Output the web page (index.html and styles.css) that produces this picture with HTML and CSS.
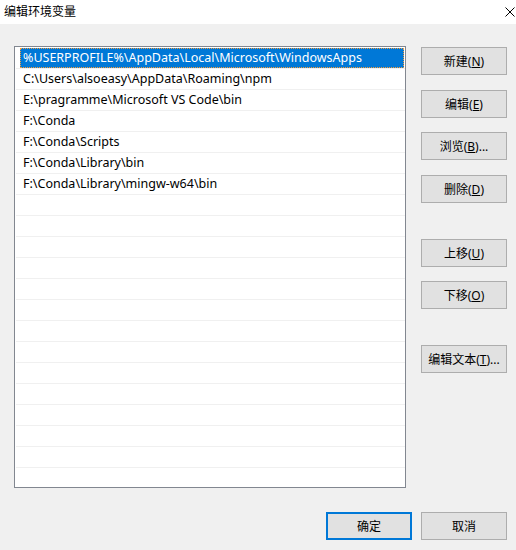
FILE: index.html
```html
<!DOCTYPE html>
<html lang="zh-CN">
<head>
    <meta charset="UTF-8">
    <title>编辑环境变量</title>
    <link rel="stylesheet" href="styles.css">
</head>
<body>
    <div class="window">
        <div class="titlebar">
            <span class="title">编辑环境变量</span>
            <svg class="close" width="10" height="10" viewBox="0 0 10 10">
                <path d="M0.5 0.5 L9.5 9.5 M9.5 0.5 L0.5 9.5" stroke="#000" stroke-width="1" fill="none"/>
            </svg>
        </div>

        <div class="content">
            <div class="main">
                <div class="listbox">
                    <div class="row"><div class="cell selected">%USERPROFILE%\AppData\Local\Microsoft\WindowsApps</div></div>
                    <div class="row"><div class="cell">C:\Users\alsoeasy\AppData\Roaming\npm</div></div>
                    <div class="row"><div class="cell">E:\pragramme\Microsoft VS Code\bin</div></div>
                    <div class="row"><div class="cell">F:\Conda</div></div>
                    <div class="row"><div class="cell">F:\Conda\Scripts</div></div>
                    <div class="row"><div class="cell">F:\Conda\Library\bin</div></div>
                    <div class="row"><div class="cell">F:\Conda\Library\mingw-w64\bin</div></div>
                    <div class="row"><div class="cell"></div></div>
                    <div class="row"><div class="cell"></div></div>
                    <div class="row"><div class="cell"></div></div>
                    <div class="row"><div class="cell"></div></div>
                    <div class="row"><div class="cell"></div></div>
                    <div class="row"><div class="cell"></div></div>
                    <div class="row"><div class="cell"></div></div>
                    <div class="row"><div class="cell"></div></div>
                    <div class="row"><div class="cell"></div></div>
                    <div class="row"><div class="cell"></div></div>
                    <div class="row"><div class="cell"></div></div>
                    <div class="row"><div class="cell"></div></div>
                    <div class="row"><div class="cell"></div></div>
                    <div class="row"><div class="cell"></div></div>
                </div>

                <div class="side">
                    <button class="btn">新建(<u>N</u>)</button>
                    <button class="btn gap-15">编辑(<u>E</u>)</button>
                    <button class="btn gap-14">浏览(<u>B</u>)...</button>
                    <button class="btn gap-15">删除(<u>D</u>)</button>
                    <button class="btn gap-36">上移(<u>U</u>)</button>
                    <button class="btn gap-14">下移(<u>O</u>)</button>
                    <button class="btn gap-36">编辑文本(<u>T</u>)...</button>
                </div>
            </div>

            <div class="footer">
                <button class="btn default">确定</button>
                <button class="btn">取消</button>
            </div>
        </div>
    </div>
</body>
</html>
```

FILE: styles.css
```css
body {
    margin: 0;
    font-family: "Noto Sans", "Noto Sans CJK SC", sans-serif;
    font-size: 12px;
    color: #000;
}
.window {
    width: 516px;
    height: 550px;
    background: #f0f0f0;
}
.titlebar {
    height: 24px;
    background: #fff;
    display: flex;
    align-items: center;
    justify-content: space-between;
    padding: 0 1px 0 4px;
}
.title {
    font-size: 12px;
    line-height: 24px;
}
.close {
    display: block;
    margin-top: -1px;
}
.content {
    padding: 22px 9px 0 14px;
}
.main {
    display: flex;
    gap: 15px;
}
.listbox {
    box-sizing: border-box;
    width: 392px;
    height: 442px;
    border: 1px solid #828790;
    background: #fff;
    padding: 1px 0 0 1px;
    overflow: hidden;
}
.row {
    height: 20px;
    border-bottom: 1px solid #f0f0f0;
    padding-left: 4px;
}
.cell {
    box-sizing: border-box;
    height: 20px;
    line-height: 20px;
    padding-left: 3px;
    margin-right: 1px;
    font-size: 12.5px;
    white-space: nowrap;
}
.selected {
    background: #0078d7;
    color: #fff;
    outline: 1px dotted #f39c3c;
    outline-offset: -1px;
}
.side {
    display: flex;
    flex-direction: column;
    padding-top: 1px;
}
.btn {
    box-sizing: border-box;
    width: 86px;
    height: 28px;
    margin: 0;
    padding: 0;
    border: 1px solid #adadad;
    background: #e1e1e1;
    font-family: "Noto Sans", "Noto Sans CJK SC", sans-serif;
    font-size: 12px;
    color: #000;
}
.btn u {
    text-underline-offset: 1px;
}
.gap-14 {
    margin-top: 14px;
}
.gap-15 {
    margin-top: 15px;
}
.gap-36 {
    margin-top: 36px;
}
.footer {
    display: flex;
    justify-content: flex-end;
    gap: 9px;
    margin-top: 24px;
}
.default {
    border: 2px solid #0078d7;
}
```
